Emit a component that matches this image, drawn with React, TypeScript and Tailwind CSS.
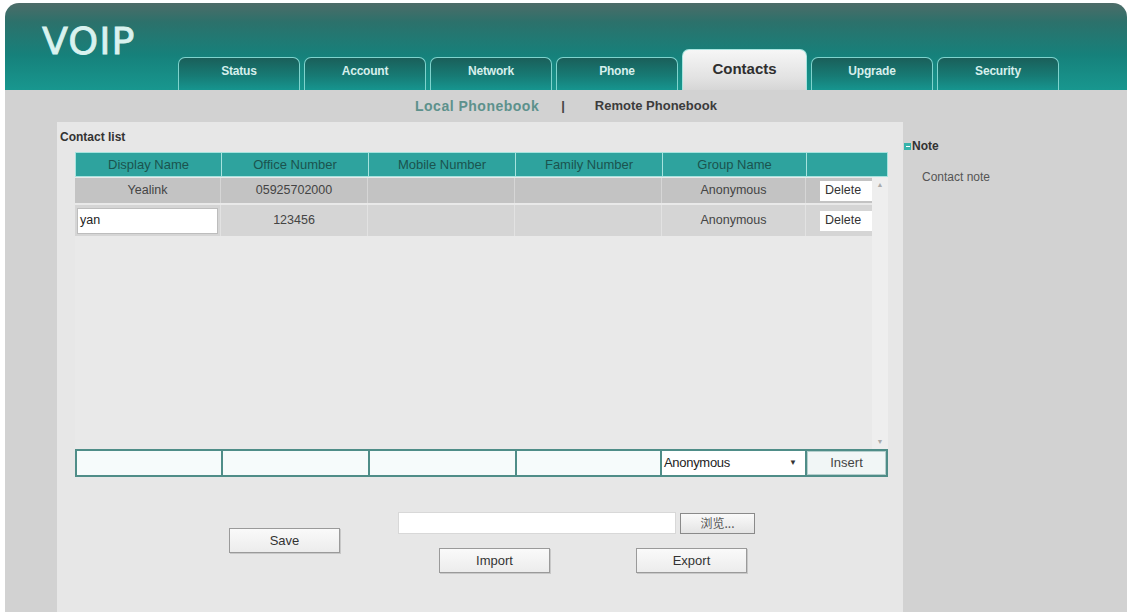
const tabs = ["Status", "Account", "Network", "Phone", "Contacts", "Upgrade", "Security"];

const cols = [
  { label: "Display Name", w: "w-[146px]" },
  { label: "Office Number", w: "w-[147px]" },
  { label: "Mobile Number", w: "w-[147px]" },
  { label: "Family Number", w: "w-[147px]" },
  { label: "Group Name", w: "w-[144px]" },
];

function Tab({ name }: { name: string }) {
  if (name === "Contacts") {
    return (
      <div className="w-[125px] h-[41px] rounded-t-[7px] border border-b-0 border-[#a8e4df] bg-[linear-gradient(180deg,#f6f6f6_0%,#e2e2e2_70%,#d6d6d6_100%)] flex items-center justify-center pb-[2px]">
        <span className="text-[15px] font-bold text-[#2f2f2f]">{name}</span>
      </div>
    );
  }
  return (
    <div className="w-[122px] h-[33px] rounded-t-[7px] border border-b-0 border-[#7fd3cd] bg-[linear-gradient(180deg,#1a5f5a_0%,#177a74_55%,#16958f_100%)] flex items-center justify-center pb-[7px]">
      <span className="text-[12px] font-bold text-[#d6efec] tracking-[-0.2px]">{name}</span>
    </div>
  );
}

function Btn({ children, w }: { children: React.ReactNode; w: string }) {
  return (
    <div
      className={`${w} h-[25px] border border-[#9a9a9a] bg-[linear-gradient(180deg,#fafafa_0%,#ececec_100%)] flex items-center justify-center text-[13px] text-[#333] shadow-[1px_1px_0_#c8c8c8]`}
    >
      {children}
    </div>
  );
}

export default function App() {
  return (
    <div
      className="w-[1129px] h-[612px] bg-white pt-[3px] pl-[5px] pr-[2px] overflow-hidden"
      style={{ fontFamily: '"Liberation Sans", Arial, sans-serif' }}
    >
      <div className="h-full flex flex-col rounded-t-[14px] overflow-hidden">
        {/* header */}
        <div className="h-[87px] flex flex-row bg-[linear-gradient(180deg,#4d6c68_0%,#2c716b_22%,#16817b_60%,#18978f_100%)]">
          <div className="w-[173px] pl-[37px] pt-[19px]">
            <span
              className="text-[38px] text-[#d9f2ef] leading-none tracking-[1px] [-webkit-text-stroke:0.8px_#d9f2ef]"
              style={{ fontFamily: '"DejaVu Sans", sans-serif' }}
            >
              VOIP
            </span>
          </div>
          <div className="flex flex-row items-end gap-[4px]">
            {tabs.map((t) => (
              <Tab key={t} name={t} />
            ))}
          </div>
        </div>

        {/* body */}
        <div className="flex-1 flex flex-col bg-[#d2d2d2]">
          <div className="h-[32px] flex flex-row items-center pl-[410px] text-[13px] font-bold">
            <span className="text-[#5d918c] text-[14px] tracking-[0.5px]">Local Phonebook</span>
            <span className="text-[#444] ml-[22px] mr-[30px]">|</span>
            <span className="text-[#3c3c3c]">Remote Phonebook</span>
          </div>

          <div className="flex-1 flex flex-row">
            <div className="w-[52px]" />

            {/* main panel */}
            <div className="w-[846px] bg-[#e7e7e7] flex flex-col">
              <div className="pl-[3px] pt-[6px] h-[30px] text-[12px] font-bold text-[#333]">Contact list</div>

              <div className="ml-[18px] w-[813px] flex flex-col">
                {/* header row */}
                <div className="flex flex-row h-[25px] bg-[#2ea39e] border border-[#a6e3de]">
                  {cols.map((c) => (
                    <div
                      key={c.label}
                      className={`${c.w} border-r border-[#a6e3de] flex items-center justify-center text-[13px] text-[#1b534e]`}
                    >
                      {c.label}
                    </div>
                  ))}
                  <div className="flex-1" />
                </div>

                {/* scroll area */}
                <div className="h-[272px] flex flex-row bg-[#e9e9e9]">
                  <div className="w-[797px] flex flex-col pt-[1px]">
                    <div className="flex flex-row h-[25px] bg-[#c3c3c3] text-[12.5px] text-[#444]">
                      <div className="w-[146px] border-r border-[#d6d6d6] flex items-center justify-center">Yealink</div>
                      <div className="w-[147px] border-r border-[#d6d6d6] flex items-center justify-center">05925702000</div>
                      <div className="w-[147px] border-r border-[#d6d6d6]" />
                      <div className="w-[147px] border-r border-[#d6d6d6]" />
                      <div className="w-[144px] border-r border-[#d6d6d6] flex items-center justify-center">Anonymous</div>
                      <div className="flex-1 flex items-center pl-[14px]">
                        <div className="w-[52px] h-[20px] bg-white flex items-center pl-[5px] text-[12.5px] text-[#333]">Delete</div>
                      </div>
                    </div>
                    <div className="flex flex-row h-[31px] mt-[2px] bg-[#d5d5d5] text-[12.5px] text-[#444]">
                      <div className="w-[146px] border-r border-[#e2e2e2] flex items-center pl-[2px] pr-[2px]">
                        <div className="w-full h-[26px] bg-white border border-[#bdbdbd] flex items-center pl-[2px] text-[12.5px] text-[#222]">yan</div>
                      </div>
                      <div className="w-[147px] border-r border-[#e2e2e2] flex items-center justify-center">123456</div>
                      <div className="w-[147px] border-r border-[#e2e2e2]" />
                      <div className="w-[147px] border-r border-[#e2e2e2]" />
                      <div className="w-[144px] border-r border-[#e2e2e2] flex items-center justify-center">Anonymous</div>
                      <div className="flex-1 flex items-center pl-[14px]">
                        <div className="w-[52px] h-[20px] bg-white flex items-center pl-[5px] text-[12.5px] text-[#333]">Delete</div>
                      </div>
                    </div>
                  </div>
                  {/* scrollbar */}
                  <div className="flex-1 bg-[#eeeeee] flex flex-col items-center justify-between py-[4px] text-[#aaa]">
                    <span className="text-[7px] leading-none">▲</span>
                    <span className="text-[7px] leading-none">▼</span>
                  </div>
                </div>

                {/* insert row */}
                <div className="flex flex-row h-[28px] border-2 border-[#4f8d88] bg-[#4f8d88] gap-[2px]">
                  <div className="w-[144px] bg-[#f6fbfb]" />
                  <div className="w-[145px] bg-[#f6fbfb]" />
                  <div className="w-[145px] bg-[#f6fbfb]" />
                  <div className="w-[143px] bg-[#f6fbfb]" />
                  <div className="w-[143px] bg-white flex flex-row items-center justify-between pl-[2px] pr-[8px] text-[13px] text-[#222]">
                    <span className="tracking-[-0.3px]">Anonymous</span>
                    <span className="text-[8px] text-[#333]">▼</span>
                  </div>
                  <div className="flex-1 bg-[#f1f6f6] border border-[#b5cfcd] flex items-center justify-center text-[13px] text-[#444]">Insert</div>
                </div>
              </div>

              {/* import / export */}
              <div className="flex flex-row mt-[35px] pl-[172px]">
                <div className="mt-[16px]">
                  <Btn w="w-[111px]">Save</Btn>
                </div>
                <div className="ml-[58px] flex flex-col">
                  <div className="flex flex-row items-center gap-[4px]">
                    <div className="w-[278px] h-[22px] bg-white border border-[#d8d8d8]" />
                    <div
                      className="w-[75px] h-[21px] border border-[#8a8a8a] bg-[linear-gradient(180deg,#fafafa_0%,#e4e4e4_100%)] flex items-center justify-center text-[12px] text-[#555]"
                      style={{ fontFamily: '"Noto Sans CJK SC", "Liberation Sans", sans-serif' }}
                    >
                      浏览...
                    </div>
                  </div>
                  <div className="flex flex-row mt-[14px] pl-[41px] gap-[86px]">
                    <Btn w="w-[111px]">Import</Btn>
                    <Btn w="w-[111px]">Export</Btn>
                  </div>
                </div>
              </div>
            </div>

            {/* right panel */}
            <div className="flex-1 flex flex-col pl-[1px] pt-[15px]">
              <div className="flex flex-row items-center">
                <div className="w-[7px] h-[7px] bg-[#37b3ab] flex items-center justify-center">
                  <div className="w-[4px] h-[1px] bg-white" />
                </div>
                <span className="text-[12px] font-bold text-[#333] ml-[1px]">Note</span>
              </div>
              <div className="pl-[18px] mt-[13px] text-[12px] text-[#555]">Contact note</div>
            </div>
          </div>
        </div>
      </div>
    </div>
  );
}
